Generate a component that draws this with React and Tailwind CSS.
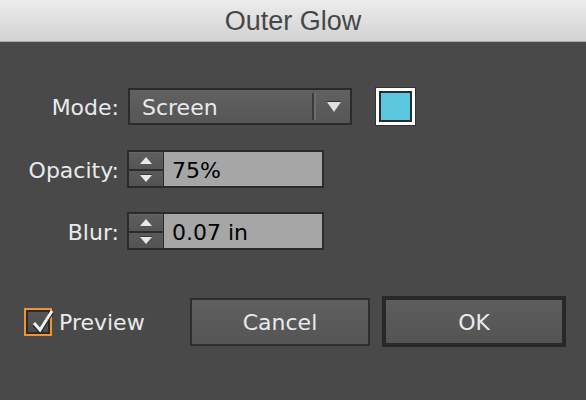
export default function App() {
  const Up = () => (
    <svg width="12" height="7" viewBox="0 0 12 7">
      <polygon points="6,0 12,7 0,7" fill="#e8e8e8" />
    </svg>
  );
  const Down = () => (
    <svg width="12" height="8" viewBox="0 0 12 8">
      <rect x="0" y="0" width="12" height="1" fill="#3a3a3a" />
      <polygon points="0,1 12,1 6,8" fill="#e8e8e8" />
    </svg>
  );
  const Spinner = ({ value }) => (
    <div className="ml-[8px] w-[197px] h-[38px] border-2 border-[#2b2b2b] bg-[#2b2b2b] flex">
      <div className="w-[34px] flex flex-col gap-[2px]">
        <div className="flex-1 bg-linear-to-b from-[#5e5e5e] to-[#555555] flex items-center justify-center border-t border-[#666]">
          <Up />
        </div>
        <div className="flex-1 bg-linear-to-b from-[#5a5a5a] to-[#535353] flex items-center justify-center">
          <Down />
        </div>
      </div>
      <div className="flex-1 ml-[1px] bg-[#a6a6a6] flex items-center pl-[8px] pt-[3px] text-black text-[22px] leading-none">
        {value}
      </div>
    </div>
  );
  const Label = ({ children }) => (
    <div className="w-[119px] text-right text-[22px] text-[#e8eaee] leading-none pt-[3px]">{children}</div>
  );
  return (
    <div className="w-[586px] h-[400px] bg-[#494949] flex flex-col overflow-hidden font-['DejaVu_Sans',sans-serif]">
      <div className="h-[42px] shrink-0 bg-linear-to-b from-[#ededed] to-[#d2d2d2] border-b border-[#a9a9a9] flex items-center justify-center text-[#474747] text-[27px] font-['Liberation_Sans',sans-serif]">
        <span className="leading-none pt-[1px]">Outer Glow</span>
      </div>
      <div className="flex flex-col pt-[46px]">
        <div className="flex items-center h-[37px]">
          <Label>Mode:</Label>
          <div className="ml-[9px] w-[224px] h-[37px] border-2 border-[#2b2b2b] bg-linear-to-b from-[#616161] to-[#565656] flex items-center">
            <span className="flex-1 pl-[12px] pt-[3px] text-[22px] text-[#e8eaee] leading-none">Screen</span>
            <div className="flex h-[27px]">
              <div className="w-[2px] bg-[#3a3a3a]" />
              <div className="w-[2px] bg-[#6c6c6c]" />
            </div>
            <div className="ml-[11px] mr-[9px] flex flex-col items-center">
              <div className="w-[14px] h-[1px] bg-[#333]" />
              <svg width="14" height="10" viewBox="0 0 14 10">
                <polygon points="0,0 14,0 7,10" fill="#e0e0e0" />
              </svg>
            </div>
          </div>
          <div className="ml-[24px] w-[39px] h-[37px] border-[3px] border-white outline outline-1 outline-[#333]">
            <div className="w-full h-full border-2 border-[#2b2b2b] bg-[#5bc8e0]" />
          </div>
        </div>
        <div className="flex items-center h-[38px] mt-[25px]">
          <Label>Opacity:</Label>
          <Spinner value="75%" />
        </div>
        <div className="flex items-center h-[38px] mt-[24px]">
          <Label>Blur:</Label>
          <Spinner value="0.07 in" />
        </div>
        <div className="flex items-center h-[51px] mt-[46px]">
          <div className="w-[190px] flex items-center pl-[24px]">
            <div className="relative w-[28px] h-[28px] border-2 border-[#f0952e]">
              <div className="w-full h-full border-2 border-[#2b2b2b] bg-linear-to-b from-[#575757] to-[#4c4c4c]" />
              <svg className="absolute left-[4px] top-[-2px]" width="24" height="26" viewBox="0 0 24 26">
                <polyline points="4,15 10,22 22,3" fill="none" stroke="#222" strokeWidth="3.5" transform="translate(0,1.5)" />
                <polyline points="4,15 10,22 22,3" fill="none" stroke="#f2f2f2" strokeWidth="3" />
              </svg>
            </div>
            <span className="ml-[7px] pt-[2px] text-[22px] text-[#e8eaee] leading-none">Preview</span>
          </div>
          <div className="w-[180px] h-[48px] border-2 border-[#2e2e2e] bg-linear-to-b from-[#5f5f5f] to-[#555555] flex items-center justify-center text-[22px] text-[#e8eaee]">
            <span className="leading-none pt-[3px]">Cancel</span>
          </div>
          <div className="ml-[12px] w-[184px] h-[51px] border-4 border-[#282828] bg-linear-to-b from-[#5d5d5d] to-[#545454] flex items-center justify-center text-[22px] text-[#e8eaee]">
            <span className="leading-none pt-[3px]">OK</span>
          </div>
        </div>
      </div>
    </div>
  );
}
